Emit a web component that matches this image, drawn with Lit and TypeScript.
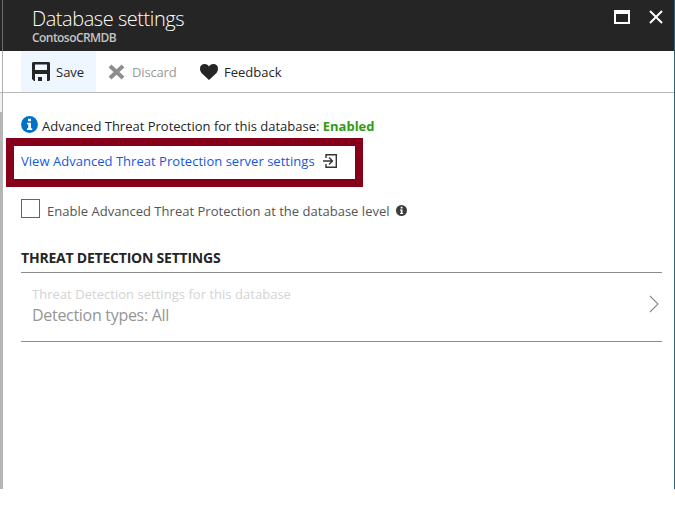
import { LitElement, html, css } from "lit";
import { customElement } from "lit/decorators.js";

@customElement("app-root")
export class AppRoot extends LitElement {
  static styles = css`
    :host { display: block; width: 675px; height: 522px; background: #fff; overflow: hidden; font-family: "Open Sans", "Noto Sans", sans-serif; font-size: 13px; color: #252525; }
    * { box-sizing: border-box; }
    svg { display: block; flex: none; }
    span { white-space: nowrap; }
    .frame { display: flex; height: 489px; }
    .rail { width: 3px; flex: none; display: flex; flex-direction: column; background: #b5b5b5; }
    .rail-head { height: 51px; background: #252525; border-right: 1px solid #6c6c6c; }
    .rail-bar { height: 42px; background: #fff; border-right: 1px solid #b0b0b0; border-bottom: 1px solid #b9b9b9; }
    .rail-gap { height: 19px; background: #f1f1f1; border-right: 1px solid #b0b0b0; }
    .blade { flex: 1; min-width: 0; border-right: 1px solid #2f6079; }
    header { height: 51px; background: #252525; color: #fff; display: flex; justify-content: space-between; padding: 7px 11px 0 29px; }
    .titles { display: flex; flex-direction: column; }
    .title { font-size: 20px; line-height: 24px; font-weight: 300; letter-spacing: -0.45px; }
    .sub { font-size: 12px; line-height: 14px; font-weight: 600; color: #c4c4c4; letter-spacing: -0.55px; }
    .controls { display: flex; gap: 19px; padding-top: 3px; }
    .toolbar { height: 42px; display: flex; border-bottom: 1px solid #b9b9b9; padding-left: 18px; }
    .cmd { display: flex; align-items: center; height: 41px; }
    .save { width: 75px; padding-left: 11px; gap: 6px; background: #eef6ff; }
    .discard { padding-left: 12px; gap: 7px; color: #999; width: 104px; }
    .discard span { letter-spacing: -0.15px; }
    .feedback { gap: 6px; }
    .status { display: flex; height: 20px; margin: 22px 0 0 18px; gap: 4px; }
    .status svg { margin-top: 1px; }
    .status-text { line-height: 22px; }
    .enabled { color: #339b13; font-weight: 700; }
    .callout { width: 357px; height: 49px; margin: 3px 0 0 3px; border: 8px solid #860019; display: flex; align-items: center; padding: 0 0 3px 7px; gap: 8px; }
    .link { color: #1459db; letter-spacing: 0.03px; }
    .check { display: flex; margin: 12px 0 0 18px; height: 24px; align-items: center; color: #555; }
    .box { margin: -6px 7px 0 0; }
    .check-text { letter-spacing: 0.02px; margin-right: 6px; }
    .check .info { margin-bottom: 2px; }
    .section { height: 32px; margin: 17px 12px 0 18px; padding-top: 9px; }
    h2 { margin: 0; font-size: 14px; line-height: 18px; font-weight: 700; letter-spacing: -0.22px; }
    .row { margin: 0 12px 0 18px; height: 70px; border-top: 1px solid #8b8b8b; border-bottom: 1px solid #8b8b8b; display: flex; align-items: center; justify-content: space-between; padding: 0 3px 6px 11px; }
    .row-text { display: flex; flex-direction: column; padding-top: 2px; }
    .row-label { color: #d3d3d3; line-height: 20px; letter-spacing: 0.03px; }
    .row-value { color: #959595; font-size: 16px; line-height: 22px; letter-spacing: -0.3px; }
  `;

  render() {
    return html`
      <div class="frame">
        <div class="rail"><div class="rail-head"></div><div class="rail-bar"></div><div class="rail-gap"></div></div>
        <div class="blade">
          <header>
            <div class="titles"><span class="title">Database settings</span><span class="sub">ContosoCRMDB</span></div>
            <div class="controls">
              <svg width="16" height="14"><path d="M0 0H16V14H0ZM2 4V12H14V4Z" fill="#fff" fill-rule="evenodd"/></svg>
              <svg width="14" height="14"><path d="M1 1L13 13M13 1L1 13" stroke="#fff" stroke-width="2"/></svg>
            </div>
          </header>
          <div class="toolbar">
            <div class="cmd save">
              <svg width="18" height="19"><path fill="#252525" fill-rule="evenodd" d="M1 0H17L18 1V18L17 19H15V12H3V19H2L0 17V1ZM3 2.500V8H15V2.500Z"/><path fill="#252525" d="M6 15H10V19H6Z"/></svg>
              <span>Save</span>
            </div>
            <div class="cmd discard">
              <svg width="17" height="16"><path d="M2 2L15 14M15 2L2 14" stroke="#8d8d8d" stroke-width="4"/></svg>
              <span>Discard</span>
            </div>
            <div class="cmd feedback">
              <svg width="18" height="16"><path fill="#252525" d="M9 16L2 9.500C0 7.500 0 5 0 4.500C0 1.500 2 0 4.600 0C6.700 0 8.200 1 9 2.500C9.800 1 11.300 0 13.400 0C16 0 18 1.500 18 4.500C18 6.500 17.300 8.200 16 9.500Z"/></svg>
              <span>Feedback</span>
            </div>
          </div>
          <div class="status">
            <svg width="17" height="17"><circle cx="8.500" cy="8.500" r="8.400" fill="#0072c6"/><path fill="#fff" d="M7 2.700H10V5.200H7ZM6 6.700H10V12.300H11.200V14H6V12.300H7.200V8.300H6Z"/></svg>
            <span class="status-text">Advanced Threat Protection for this database: <span class="enabled">Enabled</span></span>
          </div>
          <div class="callout">
            <span class="link">View Advanced Threat Protection server settings</span>
            <svg width="14" height="14"><path d="M3 4V.7H13.300V13.300H3V10M0 7H9M6 3.500L9.500 7L6 10.500" fill="none" stroke="#333" stroke-width="1.400"/></svg>
          </div>
          <div class="check">
            <svg class="box" width="19" height="19"><rect x=".5" y=".5" width="18" height="18" fill="#fff" stroke="#5a2ca8"/><rect x=".5" y=".5" width="18" height="18" fill="none" stroke="#1b9cf0" stroke-dasharray="1 1"/></svg>
            <span class="check-text">Enable Advanced Threat Protection at the database level</span>
            <svg class="info" width="11" height="11"><circle cx="5.500" cy="5.500" r="5.500" fill="#3c3c3c"/><path fill="#fff" d="M4.700 1.800H6.500V3.500H4.700ZM4 4.500H6.500V8H7.200V9H4V8H4.800V5.400H4Z"/></svg>
          </div>
          <div class="section"><h2>THREAT DETECTION SETTINGS</h2></div>
          <div class="row">
            <div class="row-text"><span class="row-label">Threat Detection settings for this database</span><span class="row-value">Detection types: All</span></div>
            <svg width="10" height="18"><path d="M1 1L9 9L1 17" fill="none" stroke="#8b8b8b" stroke-width="1.100"/></svg>
          </div>
        </div>
      </div>`;
  }
}
